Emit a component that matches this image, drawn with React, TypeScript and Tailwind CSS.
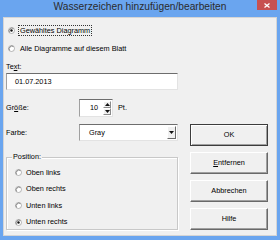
import React from "react";

function Radio({ checked }: { checked?: boolean }) {
    return (
        <svg width="7" height="7" viewBox="0 0 14 14" className="shrink-0">
            <circle cx="7" cy="7" r="6" fill="#ffffff" stroke="#9a9a9a" strokeWidth="1.4" />
            <path d="M2.8 10.8 A6 6 0 0 1 10.8 2.8" fill="none" stroke="#5f5f5f" strokeWidth="1.4" />
            {checked && <circle cx="7" cy="7" r="2.4" fill="#111111" />}
        </svg>
    );
}

function Button({ label, def }: { label: React.ReactNode; def?: boolean }) {
    return (
        <div
            className={
                "h-[22px] flex items-center justify-center bg-[#f0f0f0] text-black " +
                (def
                    ? "border border-[#3c3c3c] shadow-[inset_1px_1px_0_#ffffff,inset_-1px_-1px_0_#a0a0a0]"
                    : "border border-t-[#ffffff] border-l-[#ffffff] border-r-[#696969] border-b-[#696969] shadow-[inset_-1px_-1px_0_#a0a0a0]")
            }
        >
            {label}
        </div>
    );
}

const sunken =
    "border border-t-[#6d6d6d] border-l-[#a0a0a0] border-r-[#e3e3e3] border-b-[#e3e3e3] bg-white";

export default function App() {
    return (
        <div className="w-[280px] h-[240px] bg-[#6aa5ef] flex flex-col font-['Liberation_Sans',Arial,sans-serif] text-[7.3px] leading-none text-black overflow-hidden">
            {/* title bar */}
            <div className="h-[17px] relative flex items-center justify-center pb-[2px] shrink-0">
                <span className="text-[10.2px] text-[#2b2b2b]">Wasserzeichen hinzufügen/bearbeiten</span>
                <div className="absolute right-[3px] top-0 w-[20px] h-[10px] bg-[#c75050] flex items-center justify-center">
                    <svg width="6" height="5" viewBox="0 0 6 5">
                        <path d="M0.5 0.5 L5.5 4.5 M5.5 0.5 L0.5 4.5" stroke="#ffffff" strokeWidth="1.3" />
                    </svg>
                </div>
            </div>

            {/* client area */}
            <div className="mx-[3px] h-[219px] bg-[#f0f0f0] border border-[#d5d5d5] flex">
                {/* left column */}
                <div className="ml-[2px] w-[172px] pt-[7px] flex flex-col">
                    <div className="h-[11px] flex items-center pl-[2px]">
                        <Radio checked />
                        <span className="ml-[3px] h-[11px] px-[1px] flex items-center border border-dotted border-[#333]">
                            Gewähltes Diagramm
                        </span>
                    </div>
                    <div className="mt-[7px] h-[11px] flex items-center pl-[2px]">
                        <Radio />
                        <span className="ml-[5px]">Alle Diagramme auf diesem Blatt</span>
                    </div>
                    <div className="mt-[7px] h-[11px] flex items-center">
                        <span>
                            Te<span className="underline">x</span>t:
                        </span>
                    </div>
                    <div className={"mt-[1px] h-[17px] flex items-center pl-[8px] " + sunken}>01.07.2013</div>

                    <div className="mt-[9px] h-[18px] flex items-center">
                        <span className="w-[73px]">
                            Gr<span className="underline">ö</span>ße:
                        </span>
                        <div className={"w-[34px] h-[18px] flex items-center " + sunken}>
                            <span className="flex-1 text-right pr-[5px]">10</span>
                            <div className="w-[9px] h-full flex flex-col py-[1px] pr-[1px]">
                                <div className="flex-1 flex items-center justify-center bg-[#f0f0f0] border border-[#ffffff] border-r-[#8a8a8a] border-b-[#8a8a8a]">
                                    <svg width="5" height="3" viewBox="0 0 5 3">
                                        <path d="M0 3 L2.5 0 L5 3 Z" fill="#111" />
                                    </svg>
                                </div>
                                <div className="flex-1 flex items-center justify-center bg-[#f0f0f0] border border-[#ffffff] border-r-[#8a8a8a] border-b-[#8a8a8a]">
                                    <svg width="5" height="3" viewBox="0 0 5 3">
                                        <path d="M0 0 L2.5 3 L5 0 Z" fill="#111" />
                                    </svg>
                                </div>
                            </div>
                        </div>
                        <span className="ml-[5px]">Pt.</span>
                    </div>

                    <div className="mt-[7px] h-[17px] flex items-center">
                        <span className="w-[73px]">Farbe:</span>
                        <div className={"flex-1 h-[17px] flex items-center " + sunken}>
                            <span className="flex-1 pl-[9px]">Gray</span>
                            <div className="w-[9px] h-[13px] mr-[1px] flex items-center justify-center bg-[#f0f0f0] border border-[#ffffff] border-r-[#696969] border-b-[#696969]">
                                <svg width="5" height="3" viewBox="0 0 5 3">
                                    <path d="M0 0 L2.5 3 L5 0 Z" fill="#111" />
                                </svg>
                            </div>
                        </div>
                    </div>

                    <div className="mt-[16px] h-[73px] relative border border-[#c8c8c8] shadow-[inset_1px_1px_0_#ffffff,1px_1px_0_#ffffff] flex flex-col pt-[9px]">
                        <span className="absolute left-[5px] -top-[5px] px-[1px] bg-[#f0f0f0]">Position:</span>
                        {["Oben links", "Oben rechts", "Unten links", "Unten rechts"].map((t, i) => (
                            <div key={t} className={"h-[11px] flex items-center pl-[8px] " + (i > 0 ? "mt-[5.5px]" : "")}>
                                <Radio checked={i === 3} />
                                <span className="ml-[4px]">{t}</span>
                            </div>
                        ))}
                    </div>
                </div>

                {/* right column */}
                <div className="ml-[12px] w-[78px] pt-[106px] flex flex-col gap-[6px]">
                    <Button label="OK" def />
                    <Button
                        label={
                            <span>
                                <span className="underline">E</span>ntfernen
                            </span>
                        }
                    />
                    <Button label="Abbrechen" />
                    <Button label="Hilfe" />
                </div>
            </div>
        </div>
    );
}
